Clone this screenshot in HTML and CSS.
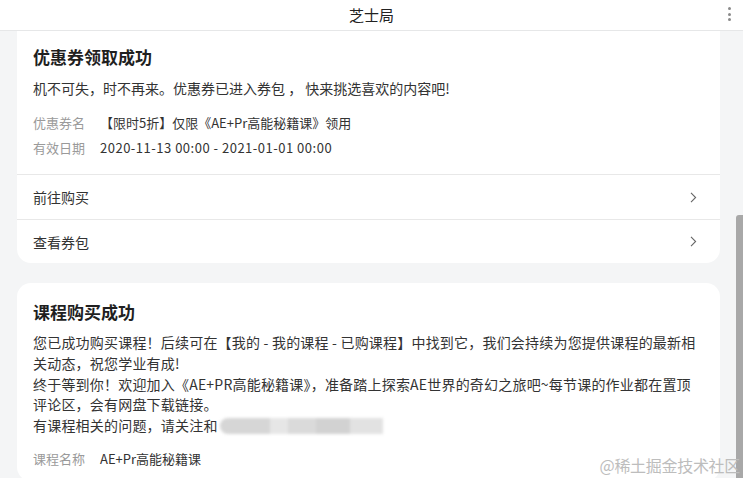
FILE: index.html
```html
<!DOCTYPE html>
<html lang="zh-CN">
<head>
<meta charset="utf-8">
<title>芝士局</title>
<link rel="stylesheet" href="styles.css">
</head>
<body>
<header class="header">
  <span></span>
  <h1 class="header-title">芝士局</h1>
  <div class="more"><i></i><i></i><i></i></div>
</header>
<main class="main">
  <section class="card card-cut">
    <div class="card-body">
      <h2 class="card-title">优惠券领取成功</h2>
      <p class="card-text">机不可失，时不再来。优惠券已进入券包 ， 快来挑选喜欢的内容吧!</p>
      <dl class="info">
        <dt>优惠券名</dt><dd>【限时5折】仅限《AE+Pr高能秘籍课》领用</dd>
        <dt>有效日期</dt><dd class="date">2020-11-13 00:00 - 2021-01-01 00:00</dd>
      </dl>
    </div>
    <a class="link-row">前往购买<svg class="chev" width="7" height="11" viewBox="0 0 7 11"><path d="M1 0.8 L5.6 5.5 L1 10.2" fill="none" stroke="#666" stroke-width="1.1"/></svg></a>
    <a class="link-row last">查看券包<svg class="chev" width="7" height="11" viewBox="0 0 7 11"><path d="M1 0.8 L5.6 5.5 L1 10.2" fill="none" stroke="#666" stroke-width="1.1"/></svg></a>
  </section>
  <section class="card">
    <div class="card-body card-body-2">
      <h2 class="card-title">课程购买成功</h2>
      <p class="card-text text-2">您已成功购买课程！后续可在【我的 - 我的课程 - 已购课程】中找到它，我们会持续为您提供课程的最新相关动态，祝您学业有成!<br>终于等到你！欢迎加入《AE+PR高能秘籍课》，准备踏上探索AE世界的奇幻之旅吧~每节课的作业都在置顶评论区，会有网盘下载链接。<br>有课程相关的问题，请关注和<span class="blurred"><i class="b1"></i><i class="b2"></i><i class="b3"></i><i class="b4"></i><i class="b5"></i></span></p>
      <dl class="info info-2">
        <dt>课程名称</dt><dd>AE+Pr高能秘籍课</dd>
      </dl>
    </div>
  </section>
</main>
<div class="scrollbar"></div>
<div class="watermark">@稀土掘金技术社区</div>
</body>
</html>
```

FILE: styles.css
```css
* { box-sizing: border-box; }
html, body {
  margin: 0;
  padding: 0;
}
body {
  width: 743px;
  height: 478px;
  overflow: hidden;
  position: relative;
  background: #f4f5f6;
  font-family: "Noto Sans CJK SC", "Noto Sans", sans-serif;
  color: #333;
}
.header {
  height: 31px;
  background: #fff;
  border-bottom: 1px solid #e6e7e8;
  display: grid;
  grid-template-columns: 1fr auto 1fr;
  align-items: center;
}
.header-title {
  margin: 0;
  font-size: 15px;
  font-weight: 400;
  color: #222;
  line-height: 28px;
}
.more {
  justify-self: end;
  margin-right: 12px;
  display: flex;
  flex-direction: column;
  gap: 2.5px;
  margin-top: -2px;
}
.more i {
  display: block;
  width: 3px;
  height: 3px;
  border-radius: 50%;
  background: #8a8a8a;
}
.main {
  padding: 0 23px 0 17px;
  display: flex;
  flex-direction: column;
  gap: 20px;
}
.card {
  background: #fff;
  border-radius: 14px;
}
.card-cut {
  border-radius: 0 0 14px 14px;
}
.card-body {
  padding: 14px 20px 14px 16px;
}
.card-body-2 {
  padding: 17px 20px 10px 16px;
}
.card-title {
  margin: 0;
  font-size: 17px;
  line-height: 24px;
  font-weight: 700;
  color: #1f1f1f;
}
.card-text {
  margin: 9px 0 0;
  font-size: 14px;
  line-height: 21px;
  color: #333;
}
.text-2 {
  margin-top: 8px;
  line-height: 20.8px;
  letter-spacing: 0.2px;
}
.info {
  margin: 11px 0 0;
  display: grid;
  grid-template-columns: 67px 1fr;
  font-size: 13px;
  line-height: 25px;
}
.info-2 {
  margin-top: 10px;
}
.info dt {
  color: #9a9a9a;
}
.info dd {
  margin: 0;
  color: #333;
}
.info .date {
  letter-spacing: 0.5px;
}
.link-row {
  display: flex;
  align-items: center;
  justify-content: space-between;
  height: 45px;
  padding: 0 23px 0 16px;
  border-top: 1px solid #e8e8e8;
  font-size: 14px;
  color: #333;
}
.link-row.last {
  height: 44px;
}
.chev {
  display: block;
}
.blurred {
  display: inline-flex;
  vertical-align: -3px;
  height: 16px;
  width: 163px;
  filter: blur(1.5px);
  margin-left: 2px;
}
.blurred i {
  display: block;
  height: 16px;
}
.b1 { width: 50px; background: #d6d6d6; border-radius: 8px 0 0 8px; }
.b2 { width: 18px; background: #e6e6e6; }
.b3 { width: 28px; background: #dadada; }
.b4 { width: 34px; background: #d2d2d2; }
.b5 { width: 33px; background: #e2e2e2; }
.scrollbar {
  position: absolute;
  right: 0;
  top: 215px;
  width: 7px;
  height: 263px;
  background: #a8a8a8;
  border-radius: 3px 0 0 0;
}
.watermark {
  position: absolute;
  right: 3px;
  top: 453px;
  font-size: 16px;
  line-height: 24px;
  color: #bdbdbd;
  letter-spacing: -0.3px;
}
```
